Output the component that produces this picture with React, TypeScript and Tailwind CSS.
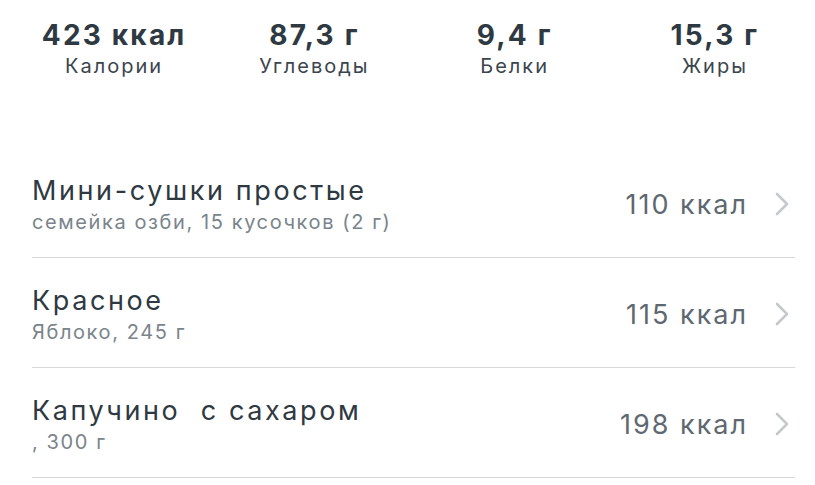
export default function App() {
  const stats = [
    { value: "423 ккал", label: "Калории" },
    { value: "87,3 г", label: "Углеводы" },
    { value: "9,4 г", label: "Белки" },
    { value: "15,3 г", label: "Жиры" },
  ];

  const items = [
    { title: "Мини-сушки простые", subtitle: "семейка озби, 15 кусочков (2 г)", kcal: "110 ккал" },
    { title: "Красное", subtitle: "Яблоко, 245 г", kcal: "115 ккал" },
    { title: "Капучино\u00a0 с сахаром", subtitle: ", 300 г", kcal: "198 ккал" },
  ];

  return (
    <div className="w-[815px] h-[485px] bg-white overflow-hidden font-['Inter',sans-serif]">
      <div className="grid grid-cols-4 pl-[14px] pt-[18px]">
        {stats.map((s) => (
          <div key={s.label} className="flex flex-col items-center">
            <div className="text-[28px] leading-[34px] font-bold tracking-[2.2px] text-[#2e3942]">{s.value}</div>
            <div className="text-[20px] leading-[24px] tracking-[2px] text-[#3b454d] mt-[2px]">{s.label}</div>
          </div>
        ))}
      </div>

      <div className="mt-[70px] pl-[32px] pr-[20px]">
        {items.map((item) => (
          <div key={item.kcal} className="h-[110px] flex items-center border-b border-[#d6d8da]">
            <div className="flex-1 flex flex-col pt-[5px]">
              <div className="text-[27px] leading-[32px] tracking-[2.6px] text-[#2e3942]">{item.title}</div>
              <div className="text-[20px] leading-[26px] tracking-[1.6px] text-[#7a848b] mt-[2px]">{item.subtitle}</div>
            </div>
            <div className="text-[27px] tracking-[2px] text-[#5e6870] mr-[-2px] pt-[5px]">{item.kcal}</div>
            <svg width="14" height="24" viewBox="0 0 14 24" className="ml-[29px] mr-[6px] mt-[3px]" fill="none">
              <polyline points="2,2 12,12 2,22" stroke="#c6c9cc" strokeWidth="2.6" strokeLinecap="round" strokeLinejoin="round" />
            </svg>
          </div>
        ))}
      </div>
    </div>
  );
}
